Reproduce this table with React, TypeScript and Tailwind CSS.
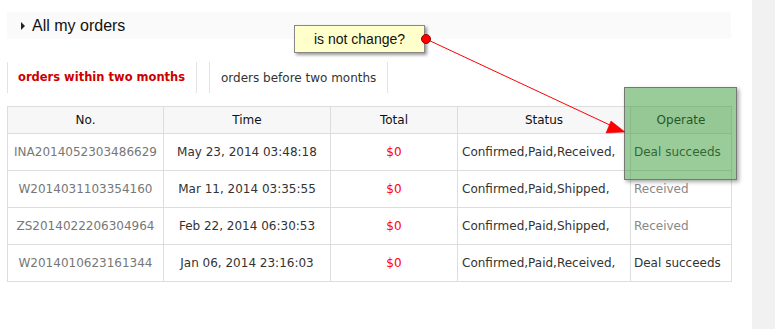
const rows = [
    { no: 'INA2014052303486629', time: 'May 23, 2014 03:48:18', total: '$0', status: 'Confirmed,Paid,Received,', op: 'Deal succeeds', done: true },
    { no: 'W2014031103354160', time: 'Mar 11, 2014 03:35:55', total: '$0', status: 'Confirmed,Paid,Shipped,', op: 'Received', done: false },
    { no: 'ZS2014022206304964', time: 'Feb 22, 2014 06:30:53', total: '$0', status: 'Confirmed,Paid,Shipped,', op: 'Received', done: false },
    { no: 'W2014010623161344', time: 'Jan 06, 2014 23:16:03', total: '$0', status: 'Confirmed,Paid,Received,', op: 'Deal succeeds', done: true },
];

const cell = 'border border-[#dddddd] h-[37px] p-0';

export default function App() {
    return (
        <div className="relative w-[775px] h-[329px] overflow-hidden bg-white flex font-['DejaVu_Sans',sans-serif] text-[12px]">
            <div className="w-[752px] pl-[7px] pr-[21px] flex flex-col">
                {/* Section title */}
                <div className="mt-[12px] h-[27px] bg-[#fafafa] flex items-center pl-[14px] gap-[7px] font-['Liberation_Sans',sans-serif] text-[16px] text-[#111]">
                    <span className="w-0 h-0 border-y-[4px] border-y-transparent border-l-[4px] border-l-[#222]" />
                    <span>All my orders</span>
                </div>

                {/* Tabs */}
                <div className="mt-[23px] h-[31px] flex gap-[12px]">
                    <div className="w-[190px] border-x border-[#e3e3e3] flex items-center pl-[10px] font-bold text-[11.5px] text-[#cc0000]">
                        orders within two months
                    </div>
                    <div className="w-[179px] border-x border-[#e3e3e3] flex items-center pl-[11px] text-[#333]">
                        orders before two months
                    </div>
                </div>

                {/* Orders table */}
                <table className="mt-[13px] w-[724px] border-collapse table-fixed">
                    <colgroup>
                        <col className="w-[156px]" />
                        <col className="w-[167px]" />
                        <col className="w-[127px]" />
                        <col className="w-[173px]" />
                        <col className="w-[101px]" />
                    </colgroup>
                    <thead>
                        <tr className="bg-[#f7f7f7] text-[#111]">
                            <th className="border border-[#dddddd] h-[27px] font-normal">No.</th>
                            <th className="border border-[#dddddd] font-normal">Time</th>
                            <th className="border border-[#dddddd] font-normal">Total</th>
                            <th className="border border-[#dddddd] font-normal">Status</th>
                            <th className="border border-[#dddddd] font-normal">Operate</th>
                        </tr>
                    </thead>
                    <tbody>
                        {rows.map(r => (
                            <tr key={r.no}>
                                <td className={`${cell} text-center text-[#777]`}>{r.no}</td>
                                <td className={`${cell} text-center text-[#333]`}>{r.time}</td>
                                <td className={`${cell} text-center text-[#ff0000]`}>{r.total}</td>
                                <td className={`${cell} pl-[4px] text-[#333]`}>{r.status}</td>
                                <td className={`${cell} pl-[3px] ${r.done ? 'text-[#333]' : 'text-[#888]'}`}>{r.op}</td>
                            </tr>
                        ))}
                    </tbody>
                </table>
            </div>

            <div className="flex-1 bg-[#f1f1f1]" />

            {/* Highlight over the Operate column */}
            <div className="absolute left-[624px] top-[87px] w-[113px] h-[93px] bg-[rgba(51,153,51,0.5)] border border-[#777] shadow-[2px_2px_4px_rgba(0,0,0,0.35)]" />

            {/* Arrow from the note */}
            <svg className="absolute inset-0 pointer-events-none" width="775" height="329">
                <line x1="426" y1="39" x2="612" y2="126" stroke="#ff0000" strokeWidth="1" />
                <polygon points="625,132 611,121 606,133" fill="#ff0000" stroke="#cc0000" strokeWidth="0.5" />
            </svg>

            {/* Note */}
            <div className="absolute left-[294px] top-[25px] w-[131px] h-[28px] bg-[#ffffcc] border border-[#888] shadow-[2px_2px_3px_rgba(0,0,0,0.4)] flex items-center justify-center font-['Liberation_Sans',sans-serif] text-[14px] text-[#111]">
                is not change?
            </div>
            <svg className="absolute inset-0 pointer-events-none" width="775" height="329">
                <circle cx="426" cy="39" r="4.5" fill="#ff0000" stroke="#990000" strokeWidth="1" />
            </svg>
        </div>
    );
}
